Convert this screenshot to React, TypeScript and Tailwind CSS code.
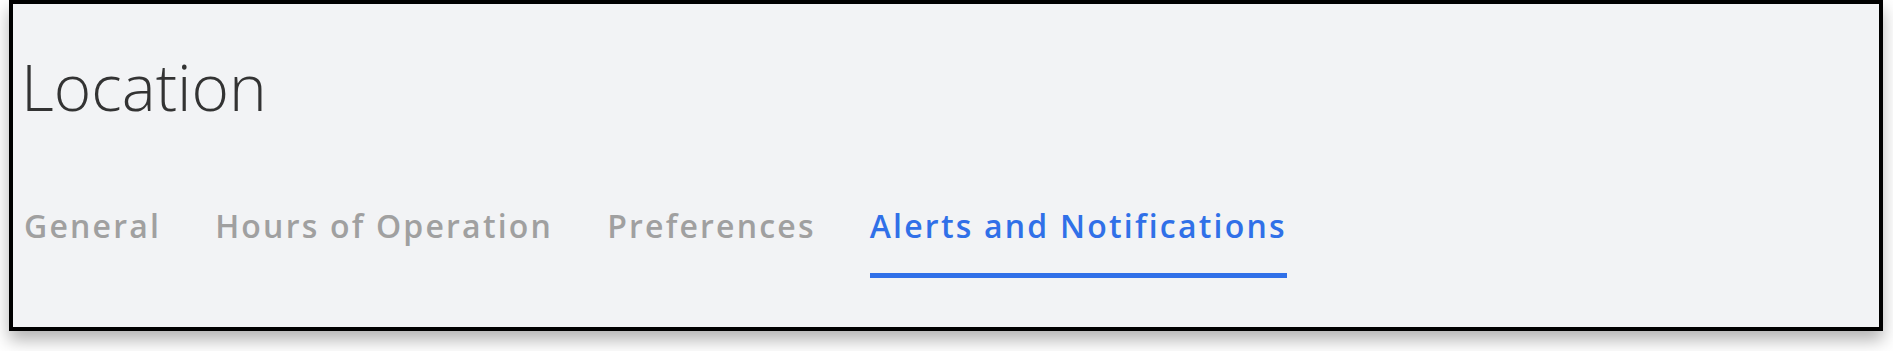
import React from "react";

const tabs = ["General", "Hours of Operation", "Preferences", "Alerts and Notifications"];

export default function App() {
  const active = 3;

  return (
    <div className="min-h-[351px] w-full bg-white pl-[9px] font-['Open_Sans',sans-serif]">
      {/* Location header card */}
      <div className="h-[331px] w-[1874px] border-[4px] border-black bg-[#f2f3f5] pl-[8px] pt-[41px] shadow-[0_9px_16px_rgba(0,0,0,0.3)]">
        <h1 className="text-[64px] font-light leading-[84px] text-[#333333]">Location</h1>

        <nav className="ml-[3px] mt-[75px] flex gap-[54px]">
          {tabs.map((t, i) => (
            <button
              key={t}
              type="button"
              className={
                i === active
                  ? "border-b-[5px] border-[#3070e8] pb-[25px] text-[32px] font-semibold leading-[44px] tracking-[2.2px] text-[#3070e8]"
                  : "border-b-[5px] border-transparent pb-[25px] text-[32px] font-semibold leading-[44px] tracking-[2.2px] text-[#a0a0a0]"
              }
            >
              {t}
            </button>
          ))}
        </nav>
      </div>
    </div>
  );
}
